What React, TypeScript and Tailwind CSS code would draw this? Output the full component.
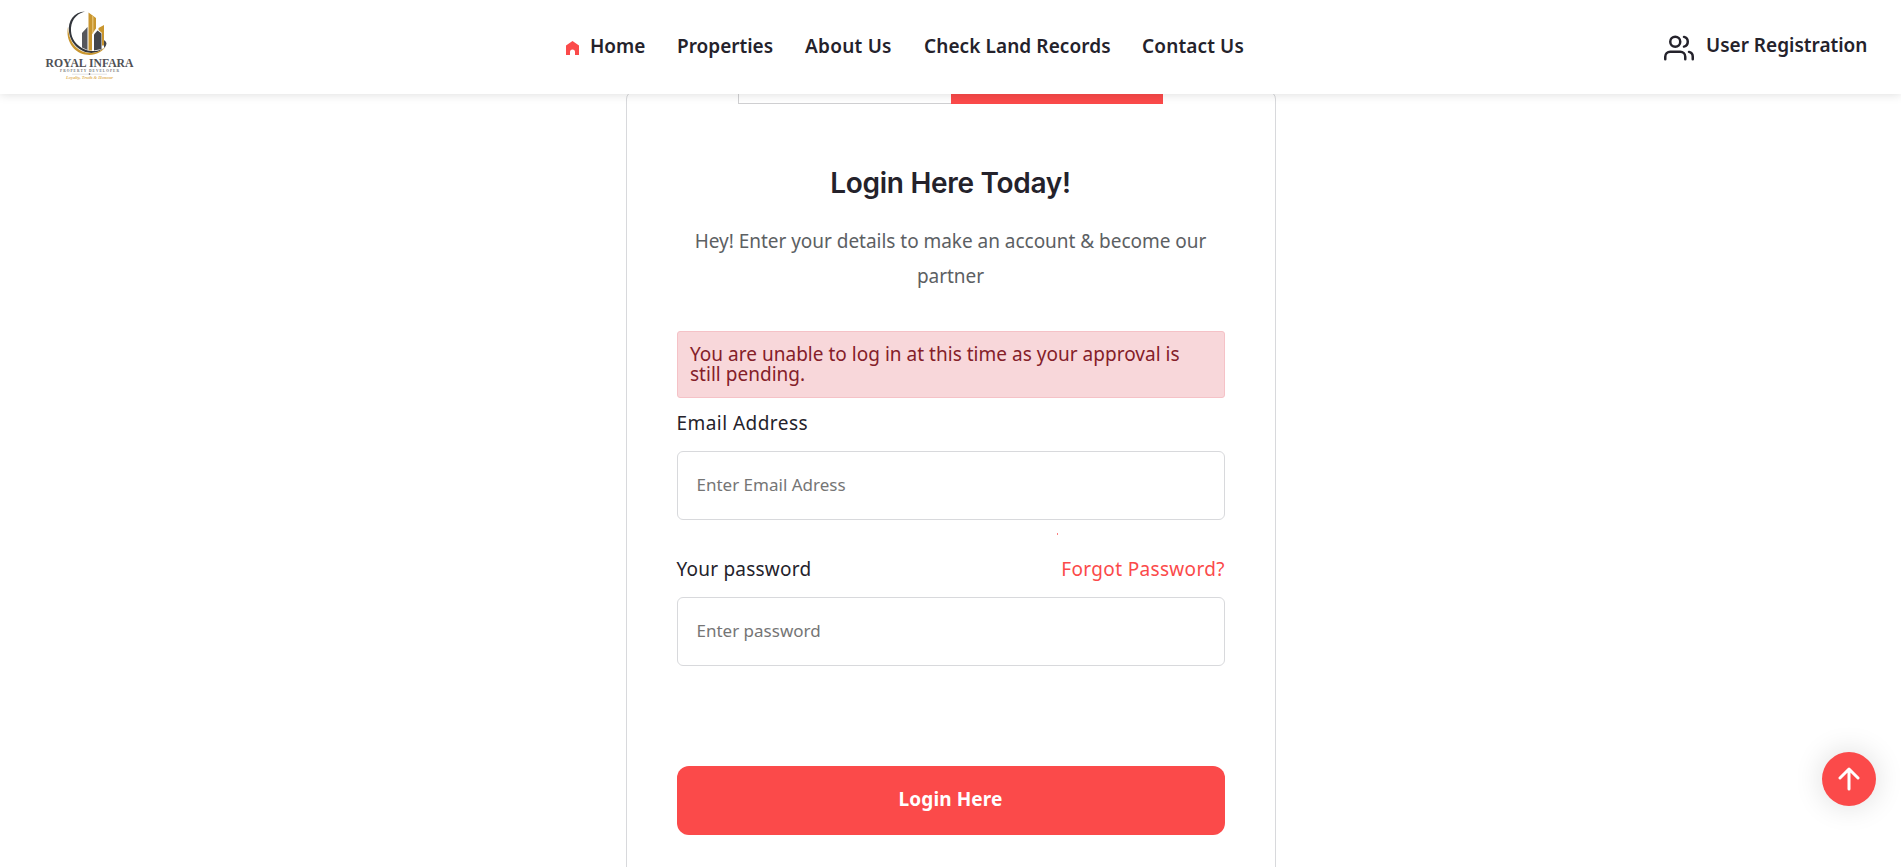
import React from "react";

const navItems = [
  { label: "Properties", cls: "w-[96px]" },
  { label: "About Us", cls: "w-[87px] tracking-[0.25px]" },
  { label: "Check Land Records", cls: "w-[186px] tracking-[0.08px]" },
  { label: "Contact Us", cls: "w-[102px] tracking-[0.14px]" },
];

function Logo() {
  return (
    <svg width="92" height="74" viewBox="44 8 92 74" className="ml-[44px] mt-[8px] shrink-0">
      <path d="M85 11.500C74 12 67.500 21 69 32C70 41 76 48 84 51.500C92 54.500 99 52.500 103 48.500C98 51.500 91 52 85 49.500C76 45.500 71.500 39 71 31C70.500 22 75 14 85 11.500Z" fill="#33363c" />
      <path d="M68 27C65.500 40 73 52 85 54.500C94 56 102 53 106 46C101 52 93 54 86 52.500C75 50 68.500 40 68 27Z" fill="#c9962f" />
      <path d="M82 33L87.500 27V50L82 47.500Z" fill="#55565c" />
      <path d="M88.500 12.500L96 18V28.500L92 34V50.500H88.500Z" fill="#c9962f" />
      <path d="M92 15.500L93.500 16.500V32L92 34Z" fill="#e3bd6c" />
      <path d="M98.500 28L104 25V45.500H102V33L98.500 30Z" fill="#c9962f" />
      <path d="M94 50.500V34.500L97.500 30.500L101.500 33.500V49Z" fill="#43454b" />
      <path d="M104 40Q109 43 104 48Z" fill="#43454b" />
      <text x="45.500" y="67" textLength="88" lengthAdjust="spacingAndGlyphs" fontSize="12" fontWeight="700" fill="#505055" className="font-['Liberation_Serif',serif]">ROYAL INFARA</text>
      <text x="60" y="72" textLength="59" fontSize="3.500" fontWeight="700" fill="#77777b" className="font-['Liberation_Serif',serif]">PROPERTY DEVELOPER</text>
      <path d="M72 74.200H107" stroke="#b5b5b8" strokeWidth="0.400" />
      <circle cx="89.500" cy="74" r="0.800" fill="#55565c" />
      <text x="66" y="79.300" textLength="47" fontSize="4.500" fontStyle="italic" fontWeight="700" fill="#dfb25c" className="font-['Liberation_Serif',serif]">Loyalty, Truth &amp; Honour</text>
    </svg>
  );
}

function Field({ placeholder, type }: { placeholder: string; type: string }) {
  return (
    <input
      type={type}
      placeholder={placeholder}
      className="mt-4 block h-[69px] w-full rounded-md border border-[#d8d9dc] bg-white px-[19px] pb-0.5 text-[17px] text-[#24222b] outline-none placeholder:text-[#757575]"
    />
  );
}

export default function App() {
  return (
    <div className="flex h-[867px] flex-col overflow-hidden bg-white font-['Noto_Sans',sans-serif] text-[19px] text-[#24222b]">
      <header className="relative z-10 flex h-[94px] shrink-0 justify-between bg-white shadow-[0_0_10px_rgba(0,0,0,0.15)]">
        <Logo />
        <nav className="absolute left-[566px] flex h-[93px] items-center gap-8 whitespace-nowrap font-semibold">
          <a className="flex w-[79px] items-center gap-[11px]">
            <svg width="13" height="14" viewBox="0 0 13 14" fill="#fb4a4a" className="mt-[3px] shrink-0">
              <path d="M6.500 0L13 4.500V14H9V11A2.500 2.500 0 0 0 4 11V14H0V4.500Z" />
            </svg>
            Home
          </a>
          {navItems.map((n) => (
            <a key={n.label} className={n.cls}>{n.label}</a>
          ))}
        </nav>
        <a className="mr-[34px] flex h-[91px] items-center gap-3 whitespace-nowrap font-semibold">
          <svg width="30" height="30" viewBox="0 0 24 24" fill="none" stroke="#24222b" strokeWidth="2" strokeLinecap="round" strokeLinejoin="round" className="mt-[4px]">
            <path d="M17 21v-2a4 4 0 0 0-4-4H5a4 4 0 0 0-4 4v2" />
            <circle cx="9" cy="7" r="4" />
            <path d="M23 21v-2a4 4 0 0 0-3-3.870" />
            <path d="M16 3.130a4 4 0 0 1 0 7.750" />
          </svg>
          <span className="w-[161px]">User Registration</span>
        </a>
      </header>

      <main className="-mt-[3px] flex flex-1 justify-center">
        <section className="relative h-[850px] w-[650px] shrink-0 rounded-[8px] border border-[#d8d9dc] px-[50px]">
          <div className="mx-auto flex h-[12px] w-[425px]">
            <div className="w-1/2 border border-t-0 border-r-0 border-[#d0d0d2]" />
            <div className="w-1/2 bg-[#fb4a4a]" />
          </div>
          <h1 className="mt-[62px] text-center font-['Inter',sans-serif] text-[28px] leading-[34px] font-semibold tracking-[-0.28px]">Login Here Today!</h1>
          <p className="mt-[24px] text-center leading-[35px] tracking-[-0.03px] text-[#5c6063]">
            Hey! Enter your details to make an account &amp; become our partner
          </p>
          <div className="mt-[37px] h-[67px] rounded-[3px] border border-[#f5c2c7] bg-[#f8d7da] px-[12.500px] pt-3 leading-5 tracking-[0.02px] text-[#842029]">
            You are unable to log in at this time as your approval is still pending.
          </div>
          <label className="mt-[13px] block leading-6 tracking-[0.45px]">Email Address</label>
          <Field type="email" placeholder="Enter Email Adress" />
          <span className="absolute top-[441px] left-[430px] h-[2px] w-px bg-[#fb4a4a]/70" />
          <div className="mt-[37px] flex justify-between leading-6">
            <label className="tracking-[0.22px]">Your password</label>
            <a className="-mr-[0.300px] tracking-[0.33px] text-[#fb4a4a]">Forgot Password?</a>
          </div>
          <Field type="password" placeholder="Enter password" />
          <button className="mt-[100px] block h-[69px] w-full rounded-xl bg-[#fb4a4a] pb-0.5 font-bold tracking-[0.1px] text-white">Login Here</button>
        </section>
      </main>

      <button className="absolute top-[752px] left-[1822px] flex size-[54px] items-center justify-center rounded-full bg-[#fb4a4a] shadow-[0_0_30px_rgba(0,0,0,0.14)]">
        <svg width="22" height="24" viewBox="0 0 22 24" fill="none" stroke="#fff" strokeWidth="3" strokeLinecap="round" strokeLinejoin="round">
          <path d="M11 22V2M2 11L11 2L20 11" />
        </svg>
      </button>
    </div>
  );
}
